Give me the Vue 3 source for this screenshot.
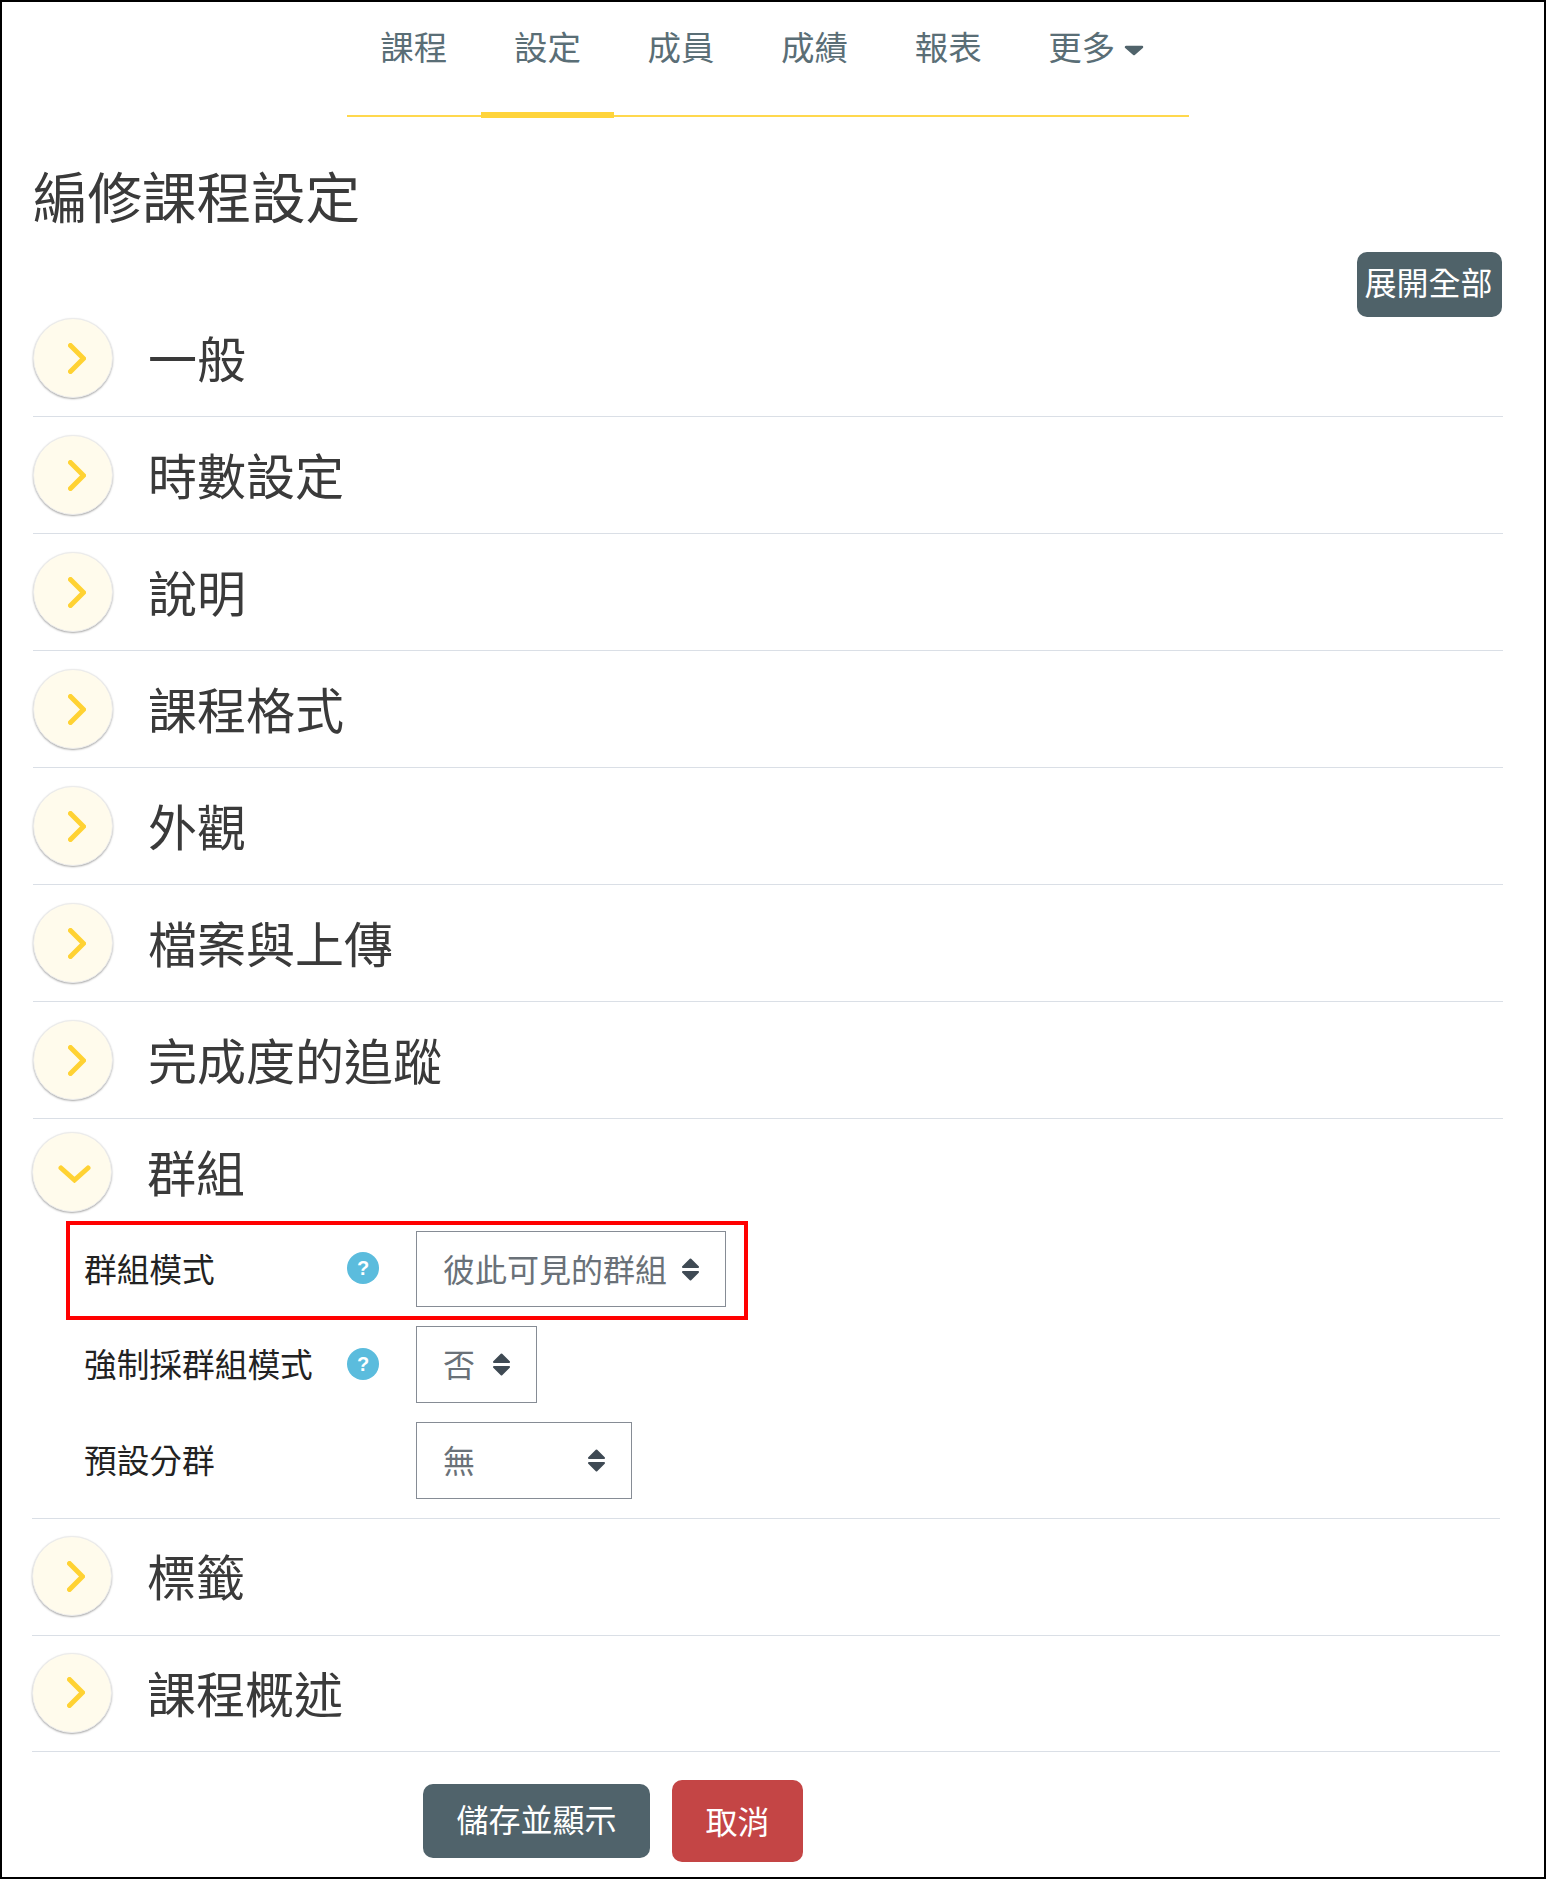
<template>
  <div class="page">
    <nav class="tabs">
      <a v-for="tab in tabs" :key="tab" class="tab" :class="{ active: tab === '設定' }">{{ tab }}</a>
      <a class="tab">
        更多
        <svg class="more-caret" width="20" height="11" viewBox="0 0 20 11">
          <path d="M2 2h16l-8 7z" fill="#50636b" stroke="#50636b" stroke-width="2.5" stroke-linejoin="round" />
        </svg>
      </a>
    </nav>

    <h1 class="title">編修課程設定</h1>

    <div class="actions">
      <button class="expand">展開全部</button>
    </div>

    <section
      v-for="section in sections"
      :key="section.name"
      class="section"
      :class="{ lower: section.lower, open: section.open }"
    >
      <div class="head">
        <span class="toggle">
          <svg v-if="section.open" class="chevron-down" width="33" height="18" viewBox="0 0 33 18">
            <polyline points="3,3 16.5,15 30,3" />
          </svg>
          <svg v-else class="chevron" width="18" height="31" viewBox="0 0 18 31">
            <polyline points="2.5,2.5 15.5,15.5 2.5,28.5" />
          </svg>
        </span>
        <h3>{{ section.name }}</h3>
      </div>

      <div v-if="section.open" class="form">
        <div v-for="field in fields" :key="field.label" class="field">
          <span v-if="field.marked" class="highlight"></span>
          <label>{{ field.label }}</label>
          <span class="help" :class="{ none: !field.help }">?</span>
          <div class="select" :class="field.size">
            <span>{{ field.value }}</span>
            <svg width="19" height="23" viewBox="0 0 19 23">
              <path d="M9.5 1.5L17 9H2zM9.5 21.5L17 14H2z" fill="#3f4a54" stroke="#3f4a54" stroke-width="2" stroke-linejoin="round" />
            </svg>
          </div>
        </div>
      </div>
    </section>

    <div class="footer">
      <button class="save">儲存並顯示</button>
      <button class="cancel">取消</button>
    </div>
  </div>
</template>

<script setup>
const tabs = ["課程", "設定", "成員", "成績", "報表"];

const sections = [
  { name: "一般" },
  { name: "時數設定" },
  { name: "說明" },
  { name: "課程格式" },
  { name: "外觀" },
  { name: "檔案與上傳" },
  { name: "完成度的追蹤" },
  { name: "群組", open: true, lower: true },
  { name: "標籤", lower: true },
  { name: "課程概述", lower: true },
];

const fields = [
  { label: "群組模式", value: "彼此可見的群組", help: true, marked: true, size: "first" },
  { label: "強制採群組模式", value: "否", help: true, size: "second" },
  { label: "預設分群", value: "無", size: "wide" },
];
</script>

<style scoped>
.page {
  box-sizing: border-box;
  width: 1546px;
  height: 1879px;
  border: 2px solid #000;
  background: #fff;
  font-family: "Noto Sans CJK TC", "Liberation Sans", sans-serif;
  color: #3a3a3a;
}
.tabs {
  display: flex;
  width: 842px;
  height: 113px;
  margin-left: 345px;
  border-bottom: 2px solid #ffd84d;
}
.tab {
  position: relative;
  padding: 25px 33.3px 0;
  font-size: 33.5px;
  line-height: 38px;
  color: #5a6e76;
}
.tab.active::after {
  content: "";
  position: absolute;
  left: 0;
  right: 0;
  bottom: -3px;
  height: 6px;
  background: #ffd43b;
}
.more-caret {
  margin-left: 1px;
  vertical-align: 4px;
}
.title {
  margin: 45px 0 0 31px;
  font-size: 54.5px;
  font-weight: 400;
  line-height: 66px;
}
.actions {
  display: flex;
  justify-content: flex-end;
  margin: 24px 42px 1px 0;
}
button {
  border: 0;
  color: #fff;
  font-family: inherit;
  font-size: 32px;
  line-height: 38px;
}
.expand {
  width: 145px;
  height: 65px;
  padding: 0 2px 7px 0;
  border-radius: 10px;
  background: #4f6269;
}
.section {
  margin: 0 41px 0 31px;
  border-bottom: 1px solid #dadfe6;
}
.section .head {
  display: flex;
  align-items: center;
  gap: 35px;
  height: 80px;
  padding: 18px 0;
}
.section:first-of-type .head {
  padding-top: 0;
}
.section.lower {
  margin: 0 44px 0 30px;
}
.section.lower .head {
  padding: 17px 0 18.5px;
}
.section.open .head {
  padding: 13px 0 0;
}
.toggle {
  display: flex;
  align-items: center;
  justify-content: center;
  box-sizing: border-box;
  flex: none;
  width: 80px;
  height: 80px;
  border: 1px solid #ececec;
  border-radius: 50%;
  background: #fffbec;
  box-shadow: 0 1px 2px rgba(0, 0, 0, 0.35);
}
.chevron {
  margin-left: 8px;
}
.chevron-down {
  margin: 3px 0 0 4px;
}
.toggle polyline {
  fill: none;
  stroke: #ffd233;
  stroke-width: 5;
  stroke-linecap: round;
  stroke-linejoin: miter;
}
.head h3 {
  margin: 0 0 2px;
  font-size: 49px;
  font-weight: 400;
  line-height: 58px;
}
.form {
  display: flex;
  flex-direction: column;
  align-items: flex-start;
  gap: 19px;
  padding: 19px 0 19px 52px;
}
.field {
  position: relative;
  display: flex;
  align-items: center;
}
.field label {
  width: 263px;
  padding-bottom: 3px;
  font-size: 32.7px;
  line-height: 40px;
  color: #222;
}
.help {
  width: 32px;
  height: 32px;
  margin: 0 37px 2px 0;
  border-radius: 50%;
  background: #5bbcdd;
  color: #fff;
  font-family: "Liberation Sans", sans-serif;
  font-size: 20px;
  font-weight: 700;
  line-height: 32px;
  text-align: center;
}
.help.none {
  visibility: hidden;
}
.select {
  display: flex;
  align-items: center;
  justify-content: space-between;
  gap: 14px;
  box-sizing: border-box;
  height: 77px;
  padding: 0 25px 3px 26px;
  border: 1px solid #868c95;
  font-size: 32px;
  line-height: 38px;
  color: #6a7178;
  white-space: nowrap;
}
.select svg {
  margin-top: 3px;
}
.select.first {
  width: 310px;
  height: 76px;
}
.select.second {
  width: 121px;
}
.select.wide {
  width: 216px;
}
.highlight {
  position: absolute;
  top: -10px;
  right: -22px;
  bottom: -13px;
  left: -18px;
  border: 4px solid #f00;
}
.footer {
  display: flex;
  align-items: center;
  gap: 22px;
  margin: 28px 0 0 421px;
}
.save {
  width: 227px;
  height: 74px;
  padding-bottom: 7px;
  border-radius: 10px;
  background: #50636b;
}
.cancel {
  width: 131px;
  height: 82px;
  padding-bottom: 4px;
  border-radius: 10px;
  background: #c44545;
}
</style>
